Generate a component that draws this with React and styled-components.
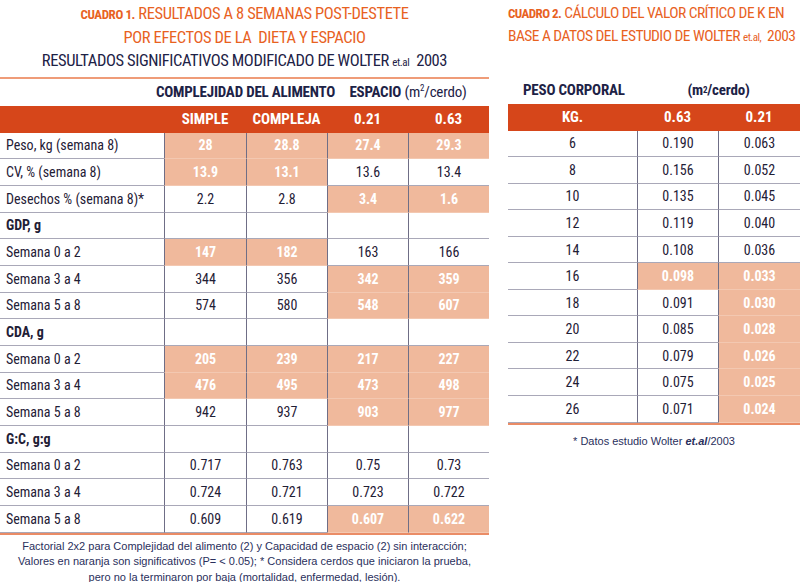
import React from 'react'
import styled, { createGlobalStyle } from 'styled-components'

const ORANGE = '#d6461a'
const TITLE = '#e8621f'
const SALMON = '#f0b99c'
const NAVY = '#1d2246'
const INK = '#1f2036'

const GlobalStyle = createGlobalStyle`
  body {
    margin: 0;
    background: #fff;
    font-family: "Noto Sans Condensed", "Noto Sans SemiCondensed", "Roboto Condensed", "DejaVu Sans Condensed", sans-serif;
    color: ${INK};
  }
`

const leftRows = [
  { label: 'Peso, kg (semana 8)', vals: ['28', '28.8', '27.4', '29.3'], hl: [1, 1, 1, 1] },
  { label: 'CV, % (semana 8)', vals: ['13.9', '13.1', '13.6', '13.4'], hl: [1, 1, 0, 0] },
  { label: 'Desechos % (semana 8)*', vals: ['2.2', '2.8', '3.4', '1.6'], hl: [0, 0, 1, 1] },
  { label: 'GDP, g', group: true },
  { label: 'Semana 0 a 2', vals: ['147', '182', '163', '166'], hl: [1, 1, 0, 0] },
  { label: 'Semana 3 a 4', vals: ['344', '356', '342', '359'], hl: [0, 0, 1, 1] },
  { label: 'Semana 5 a 8', vals: ['574', '580', '548', '607'], hl: [0, 0, 1, 1] },
  { label: 'CDA, g', group: true },
  { label: 'Semana 0 a 2', vals: ['205', '239', '217', '227'], hl: [1, 1, 1, 1] },
  { label: 'Semana 3 a 4', vals: ['476', '495', '473', '498'], hl: [1, 1, 1, 1] },
  { label: 'Semana 5 a 8', vals: ['942', '937', '903', '977'], hl: [0, 0, 1, 1] },
  { label: 'G:C, g:g', group: true },
  { label: 'Semana 0 a 2', vals: ['0.717', '0.763', '0.75', '0.73'], hl: [0, 0, 0, 0] },
  { label: 'Semana 3 a 4', vals: ['0.724', '0.721', '0.723', '0.722'], hl: [0, 0, 0, 0] },
  { label: 'Semana 5 a 8', vals: ['0.609', '0.619', '0.607', '0.622'], hl: [0, 0, 1, 1] },
]

const rightRows = [
  ['6', '0.190', '0.063', 0, 0],
  ['8', '0.156', '0.052', 0, 0],
  ['10', '0.135', '0.045', 0, 0],
  ['12', '0.119', '0.040', 0, 0],
  ['14', '0.108', '0.036', 0, 0],
  ['16', '0.098', '0.033', 1, 1],
  ['18', '0.091', '0.030', 0, 1],
  ['20', '0.085', '0.028', 0, 1],
  ['22', '0.079', '0.026', 0, 1],
  ['24', '0.075', '0.025', 0, 1],
  ['26', '0.071', '0.024', 0, 1],
]

const App = () => (
  <>
    <GlobalStyle />
    <Page>
      <LeftPanel>
        <TitleBlock $align="center">
          <TitleLine>
            <Tag>CUADRO 1.</Tag> RESULTADOS A 8 SEMANAS POST-DESTETE
          </TitleLine>
          <TitleLine>POR EFECTOS DE LA&nbsp; DIETA Y ESPACIO</TitleLine>
          <TitleLine $navy>
            RESULTADOS SIGNIFICATIVOS MODIFICADO DE WOLTER <Small>et.al</Small>&nbsp; 2003
          </TitleLine>
        </TitleBlock>
        <Rule />
        <LeftGrid>
          <GroupHead />
          <GroupHead $span={2}>COMPLEJIDAD DEL ALIMENTO</GroupHead>
          <GroupHead $span={2}>
            ESPACIO&nbsp;<Light>(m<sup>2</sup>/cerdo)</Light>
          </GroupHead>
        </LeftGrid>
        <LeftGrid $orange>
          <HeadCell />
          <HeadCell>SIMPLE</HeadCell>
          <HeadCell>COMPLEJA</HeadCell>
          <HeadCell>0.21</HeadCell>
          <HeadCell>0.63</HeadCell>
        </LeftGrid>
        {leftRows.map((row, i) => (
          <LeftGrid key={i} $last={i === leftRows.length - 1}>
            <Label $bold={row.group}>{row.label}</Label>
            {[0, 1, 2, 3].map(c => (
              <Cell key={c} $hl={row.vals && row.hl[c]}>
                {row.vals ? row.vals[c] : ''}
              </Cell>
            ))}
          </LeftGrid>
        ))}
        <Note>
          Factorial 2x2 para Complejidad del alimento (2) y Capacidad de espacio (2) sin interacción;
          <br />
          Valores en naranja son significativos (P= &lt; 0.05); * Considera cerdos que iniciaron la prueba,
          <br />
          pero no la terminaron por baja (mortalidad, enfermedad, lesión).
        </Note>
      </LeftPanel>

      <RightPanel>
        <TitleBlock>
          <TitleLine $tight>
            <Tag>CUADRO 2.</Tag> CÁLCULO DEL VALOR CRÍTICO DE K EN
          </TitleLine>
          <TitleLine $tight>
            BASE A DATOS DEL ESTUDIO DE WOLTER <Small>et.al,</Small>&nbsp; 2003
          </TitleLine>
        </TitleBlock>
        <RightGrid>
          <GroupHead $left>PESO CORPORAL</GroupHead>
          <GroupHead $span={2}>
            (m<sup>2</sup>/cerdo)
          </GroupHead>
        </RightGrid>
        <RightGrid $orange>
          <HeadCell>KG.</HeadCell>
          <HeadCell>0.63</HeadCell>
          <HeadCell>0.21</HeadCell>
        </RightGrid>
        {rightRows.map(([kg, a, b, ha, hb], i) => (
          <RightGrid key={kg} $last={i === rightRows.length - 1}>
            <Cell $noLine>{kg}</Cell>
            <Cell $hl={ha}>{a}</Cell>
            <Cell $hl={hb}>{b}</Cell>
          </RightGrid>
        ))}
        <SideNote>
          * Datos estudio Wolter <em>et.al</em>/2003
        </SideNote>
      </RightPanel>
    </Page>
  </>
)

const Page = styled.div`
  display: flex;
  width: 800px;
  height: 582px;
  overflow: hidden;
`

const LeftPanel = styled.div`
  width: 489px;
  flex-shrink: 0;
`

const RightPanel = styled.div`
  width: 292px;
  margin-left: 19px;
  flex-shrink: 0;
`

const TitleBlock = styled.div`
  height: 77px;
  padding-top: 2px;
  box-sizing: border-box;
  text-align: ${p => p.$align || 'left'};
`

const TitleLine = styled.div`
  font-size: ${p => (p.$tight ? '15.5px' : '16.5px')};
  letter-spacing: ${p => (p.$tight ? '-0.55px' : '-0.4px')};
  line-height: 23px;
  color: ${p => (p.$navy ? NAVY : TITLE)};
  white-space: nowrap;
`

const Tag = styled.span`
  font-weight: 700;
  font-size: 13px;
`

const Small = styled.span`
  font-size: 11px;
`

const Rule = styled.div`
  height: 2px;
  background: #ef9c78;
`

const LeftGrid = styled.div`
  display: grid;
  grid-template-columns: 164px 82px 81px 81px 81px;
  height: ${p => (p.$orange ? '27px' : '26.67px')};
  background: ${p => (p.$orange ? ORANGE : 'transparent')};
  border-bottom: ${p => (p.$last ? `2px solid #ea8c66` : 'none')};
`

const RightGrid = styled.div`
  display: grid;
  grid-template-columns: 129px 81px 82px;
  height: ${p => (p.$orange ? '27px' : '26.55px')};
  background: ${p => (p.$orange ? ORANGE : 'transparent')};
  border-bottom: ${p => (p.$last ? `2px solid #ea8c66` : 'none')};
`

const GroupHead = styled.div`
  grid-column: span ${p => p.$span || 1};
  display: flex;
  align-items: center;
  justify-content: ${p => (p.$left ? 'flex-start' : 'center')};
  padding-left: ${p => (p.$left ? '15px' : '0')};
  font-size: 15px;
  letter-spacing: -0.2px;
  font-weight: 700;
  color: ${NAVY};
  white-space: nowrap;

  sup {
    font-size: 9px;
    line-height: 0;
  }
`

const Light = styled.span`
  font-weight: 400;
`

const HeadCell = styled.div`
  display: flex;
  align-items: center;
  justify-content: center;
  color: #fff;
  font-weight: 700;
  font-size: 15px;
`

const Label = styled.div`
  display: flex;
  align-items: center;
  padding-left: 6px;
  font-size: 14px;
  font-weight: ${p => (p.$bold ? 700 : 400)};
  border-bottom: 1px solid #a9a8b8;
  white-space: nowrap;
`

const Cell = styled.div`
  display: flex;
  align-items: center;
  justify-content: center;
  font-size: 14px;
  background: ${p => (p.$hl ? SALMON : 'transparent')};
  color: ${p => (p.$hl ? '#fff' : INK)};
  font-weight: ${p => (p.$hl ? 700 : 400)};
  border-left: ${p => (p.$noLine ? 'none' : '1px solid #6f6e86')};
  border-bottom: 1px solid ${p => (p.$hl ? '#f3c8b1' : '#a9a8b8')};
`

const Note = styled.p`
  margin: 4px 0 0;
  text-align: center;
  font-family: "Liberation Sans", Arial, sans-serif;
  font-size: 11px;
  line-height: 15.5px;
  color: #2a2f5c;
  white-space: nowrap;
`

const SideNote = styled.p`
  margin: 10px 0 0;
  text-align: center;
  font-family: "Liberation Sans", Arial, sans-serif;
  font-size: 11px;
  color: #2a2f5c;

  em {
    font-weight: 700;
  }
`

export default App
